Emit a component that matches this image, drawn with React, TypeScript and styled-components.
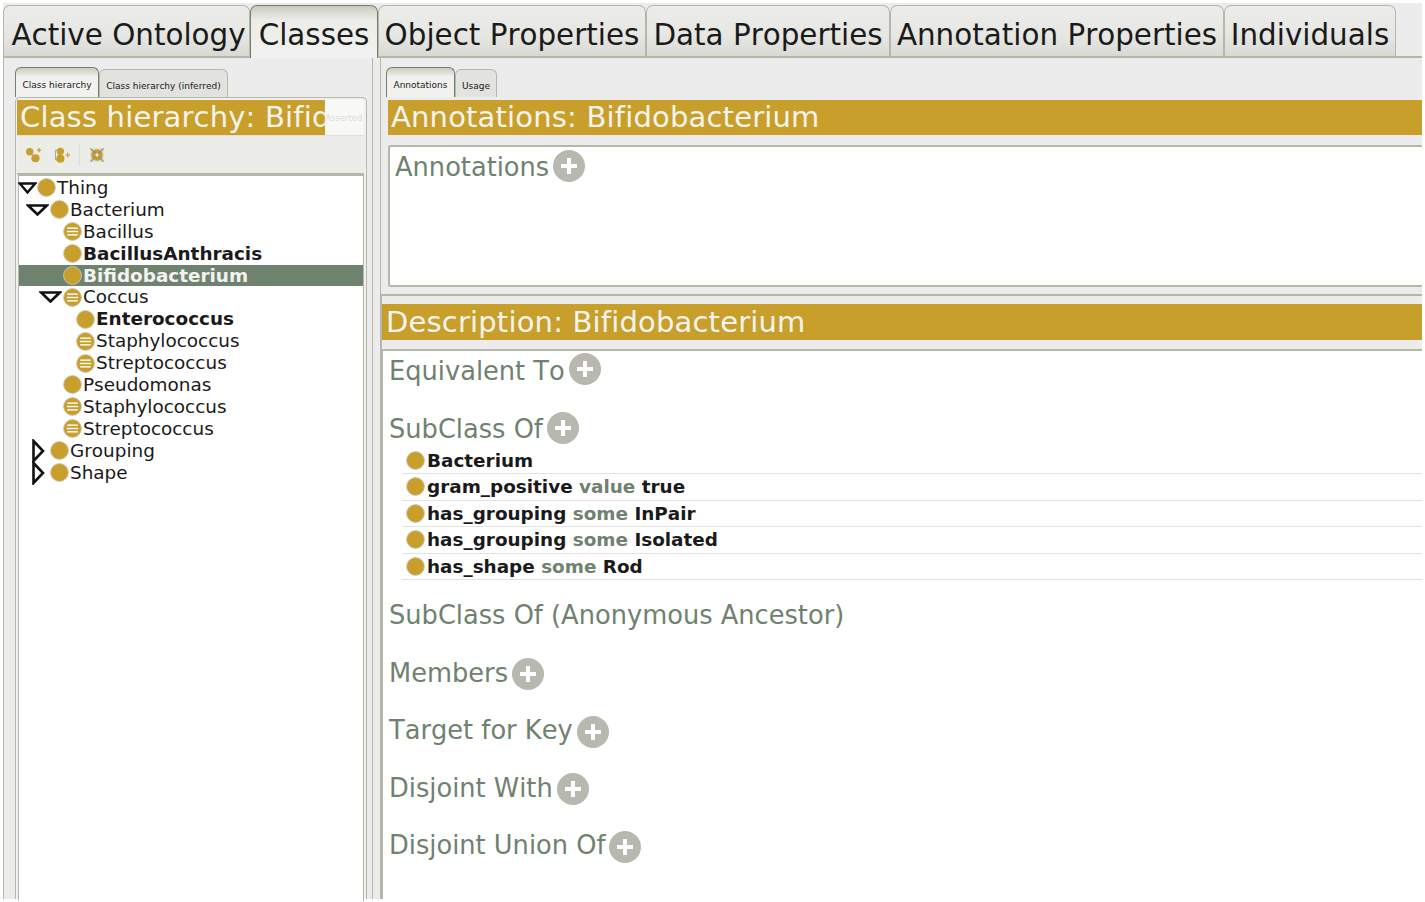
import React from "react";
import styled, { createGlobalStyle } from "styled-components";

const GOLD = "#c99f2b";
const GREEN = "#6f8270";
const LINE = "#b5b8a8";

const GlobalStyle = createGlobalStyle`
  html, body {
    margin: 0;
    padding: 0;
    background: #ffffff;
  }
  * {
    box-sizing: border-box;
  }
`;

type Node = { label: string; depth: number; bold?: boolean; lined?: boolean; toggle?: "open" | "closed"; selected?: boolean };

const tree: Node[] = [
  { label: "Thing", depth: 0, toggle: "open" },
  { label: "Bacterium", depth: 1, toggle: "open" },
  { label: "Bacillus", depth: 2, lined: true },
  { label: "BacillusAnthracis", depth: 2, bold: true },
  { label: "Bifidobacterium", depth: 2, bold: true, selected: true },
  { label: "Coccus", depth: 2, lined: true, toggle: "open" },
  { label: "Enterococcus", depth: 3, bold: true },
  { label: "Staphylococcus", depth: 3, lined: true },
  { label: "Streptococcus", depth: 3, lined: true },
  { label: "Pseudomonas", depth: 2 },
  { label: "Staphylococcus", depth: 2, lined: true },
  { label: "Streptococcus", depth: 2, lined: true },
  { label: "Grouping", depth: 1, toggle: "closed" },
  { label: "Shape", depth: 1, toggle: "closed" },
];

const mainTabs = [
  { label: "Active Ontology", width: 247 },
  { label: "Classes", width: 128, active: true },
  { label: "Object Properties", width: 268 },
  { label: "Data Properties", width: 244 },
  { label: "Annotation Properties", width: 334 },
  { label: "Individuals", width: 172 },
];

const subclassRows = [
  { left: "Bacterium" },
  { left: "gram_positive", kw: "value", right: "true" },
  { left: "has_grouping", kw: "some", right: "InPair" },
  { left: "has_grouping", kw: "some", right: "Isolated" },
  { left: "has_shape", kw: "some", right: "Rod" },
];

const ClassIcon = ({ lined }: { lined?: boolean }) => (
  <IconSvg viewBox="0 0 20 20">
    <circle cx="10" cy="10" r="9.4" fill={GOLD} stroke="#c9c6b8" strokeWidth="1" />
    {lined && (
      <g stroke="#ffffff" strokeWidth="1.5">
        <line x1="4.5" y1="6.5" x2="15.5" y2="6.5" />
        <line x1="4" y1="10" x2="16" y2="10" />
        <line x1="4.5" y1="13.5" x2="15.5" y2="13.5" />
      </g>
    )}
  </IconSvg>
);

const Toggle = ({ kind, depth }: { kind?: "open" | "closed"; depth: number }) => {
  if (kind === "open") {
    return (
      <DownArrow $wide={depth > 0} viewBox="0 0 22 12" preserveAspectRatio="none">
        <path d="M2 1.5 H20 L11 10.5 Z" fill="#ffffff" stroke="#111" strokeWidth="2.6" />
      </DownArrow>
    );
  }
  if (kind === "closed") {
    return (
      <RightArrow viewBox="0 0 13 24">
        <path d="M1.5 2 L11 12 L1.5 22 Z" fill="#ffffff" stroke="#111" strokeWidth="2.6" />
      </RightArrow>
    );
  }
  return null;
};

const Plus = ({ dy = 0 }: { dy?: number }) => (
  <PlusSvg $dy={dy} viewBox="0 0 32 32">
    <circle cx="16" cy="16" r="16" fill="#b8b8ae" />
    <path d="M16 8 V24 M8 16 H24" stroke="#ffffff" strokeWidth="4" />
  </PlusSvg>
);

const Section = ({ title, plus = true, dy = 0, children }: { title: string; plus?: boolean; dy?: number; children?: React.ReactNode }) => (
  <SectionBlock>
    <SectionHead>
      <SectionTitle>{title}</SectionTitle>
      {plus && <Plus dy={dy} />}
    </SectionHead>
    {children}
  </SectionBlock>
);

export default function App() {
  return (
    <Page>
      <GlobalStyle />
      <MainTabs>
        {mainTabs.map((t) => (
          <MainTab key={t.label} $active={t.active} $width={t.width}>
            {t.label}
          </MainTab>
        ))}
      </MainTabs>
      <Workspace>
        <LeftColumn>
          <SubTabs>
            <SubTab $active $width={84}>Class hierarchy</SubTab>
            <SubTab $width={129}>Class hierarchy (inferred)</SubTab>
          </SubTabs>
          <ViewFrame>
            <LeftHeader>
              <LeftTitle>Class hierarchy: Bifidobacterium</LeftTitle>
              <Ghost>Asserted</Ghost>
            </LeftHeader>
            <Toolbar>
              <ToolIcon viewBox="0 0 22 22">
                <circle cx="7" cy="7" r="4.5" fill={GOLD} />
                <circle cx="14" cy="15" r="5" fill={GOLD} />
                <path d="M7 7 L14 15" stroke="#999" strokeWidth="1" />
                <path d="M16 5 H21 M18.5 2.5 V7.5" stroke={GOLD} strokeWidth="1.4" />
              </ToolIcon>
              <ToolIcon viewBox="0 0 22 22">
                <path d="M6 5 H3 V17 H6" fill="none" stroke="#999" strokeWidth="1" />
                <circle cx="9" cy="6.5" r="4.5" fill={GOLD} />
                <circle cx="9" cy="15.5" r="5" fill={GOLD} />
                <path d="M15 11 H21 M18 8 V14" stroke={GOLD} strokeWidth="1.4" />
              </ToolIcon>
              <ToolDivider />
              <ToolIcon viewBox="0 0 22 22">
                <rect x="3" y="3" width="16" height="16" fill="#d9d6c6" />
                <circle cx="11" cy="11" r="7" fill={GOLD} />
                <path d="M3 3 L19 19 M19 3 L3 19" stroke="#8c8c80" strokeWidth="1.4" />
                <circle cx="11" cy="11" r="2" fill="#efefe8" />
              </ToolIcon>
            </Toolbar>
            <TreeBox>
              {tree.map((n, i) => (
                <TreeRow key={i} $depth={n.depth} $selected={n.selected}>
                  <ToggleSlot>
                    <Toggle kind={n.toggle} depth={n.depth} />
                  </ToggleSlot>
                  <ClassIcon lined={n.lined} />
                  <TreeLabel $bold={n.bold}>{n.label}</TreeLabel>
                </TreeRow>
              ))}
            </TreeBox>
          </ViewFrame>
        </LeftColumn>

        <RightColumn>
          <UpperPane>
            <SubTabs>
              <SubTab $active $width={69}>Annotations</SubTab>
              <SubTab $width={42}>Usage</SubTab>
            </SubTabs>
            <AnnotationsBar>Annotations: Bifidobacterium</AnnotationsBar>
            <AnnotationBox>
              <SectionHead>
                <SectionTitle>Annotations</SectionTitle>
                <Plus dy={-1} />
              </SectionHead>
            </AnnotationBox>
          </UpperPane>
          <LowerPane>
            <GoldBar>Description: Bifidobacterium</GoldBar>
            <DescriptionBox>
              <Section title="Equivalent To" dy={-2} />
              <Section title="SubClass Of" dy={-1}>
                <AxiomList>
                  {subclassRows.map((r, i) => (
                    <AxiomRow key={i}>
                      <ClassIcon />
                      <span>
                        {r.left}
                        {r.kw && <Keyword> {r.kw} </Keyword>}
                        {r.right}
                      </span>
                    </AxiomRow>
                  ))}
                </AxiomList>
              </Section>
              <Section title="SubClass Of (Anonymous Ancestor)" plus={false} />
              <Section title="Members" dy={1} />
              <Section title="Target for Key" dy={2} />
              <Section title="Disjoint With" dy={1} />
              <Section title="Disjoint Union Of" dy={2} />
            </DescriptionBox>
          </LowerPane>
        </RightColumn>
      </Workspace>
    </Page>
  );
}

const Page = styled.div`
  width: 1425px;
  height: 902px;
  padding: 3px 3px 3px 3px;
  background: #ffffff;
  overflow: hidden;
  font-family: "DejaVu Sans", sans-serif;
  font-kerning: none;
  color: #1a1a1a;
  display: flex;
  flex-direction: column;
`;

const MainTabs = styled.div`
  height: 55px;
  flex: none;
  display: flex;
  align-items: flex-end;
  background: #ececec;
  border-bottom: 2px solid ${LINE};
`;

const MainTab = styled.div<{ $active?: boolean; $width: number }>`
  width: ${(p) => p.$width}px;
  height: ${(p) => (p.$active ? "53px" : "51px")};
  margin-bottom: ${(p) => (p.$active ? "-2px" : "0")};
  padding-bottom: ${(p) => (p.$active ? "3px" : "1px")};
  flex: none;
  display: flex;
  align-items: flex-end;
  justify-content: center;
  font-size: 29.4px;
  line-height: 40px;
  white-space: nowrap;
  border: 1px solid ${(p) => (p.$active ? GREEN : LINE)};
  border-bottom: none;
  border-radius: 7px 7px 0 0;
  background: ${(p) =>
    p.$active
      ? "linear-gradient(#c9cbbd 0, #ecece8 14px, #f1f1ef 100%)"
      : "linear-gradient(#ececea 0, #e6e6e3 60%, #d9d9d4 100%)"};

  &:first-child {
    padding-left: 4px;
  }
`;

const Workspace = styled.div`
  flex: 1;
  min-height: 0;
  display: flex;
  background: #ececec;
`;

const LeftColumn = styled.div`
  width: 370px;
  flex: none;
  padding: 8px 5px 0 11px;
  border-left: 1px solid ${LINE};
  border-right: 1px solid ${LINE};
  display: flex;
  flex-direction: column;
`;

const RightColumn = styled.div`
  flex: 1;
  min-width: 0;
  margin-left: 7px;
  display: flex;
  flex-direction: column;
`;

const SubTabs = styled.div`
  height: 31px;
  flex: none;
  display: flex;
  align-items: flex-end;
`;

const SubTab = styled.div<{ $active?: boolean; $width: number }>`
  width: ${(p) => p.$width}px;
  height: ${(p) => (p.$active ? "30px" : "28px")};
  flex: none;
  font-size: 9px;
  padding-top: ${(p) => (p.$active ? "12px" : "11px")};
  text-align: center;
  white-space: nowrap;
  border: 1px solid ${(p) => (p.$active ? GREEN : LINE)};
  border-bottom: none;
  border-radius: 6px 6px 0 0;
  background: ${(p) => (p.$active ? "linear-gradient(#c9cbbd 0, #f1f1ef 9px)" : "#e2e2de")};
`;

const ViewFrame = styled.div`
  flex: 1;
  min-height: 0;
  width: 352px;
  padding: 2px 2px 0 1px;
  border: 1px solid ${LINE};
  border-bottom: none;
  border-radius: 5px 5px 0 0;
  background: #f0f0ee;
  display: flex;
  flex-direction: column;
`;

const LeftHeader = styled.div`
  height: 36px;
  flex: none;
  display: flex;
  align-items: center;
  background: #f8f8f6;
  border-bottom: 1px solid #e1e1dc;
`;

const LeftTitle = styled.div`
  width: 308px;
  height: 35px;
  flex: none;
  padding-left: 3px;
  overflow: hidden;
  white-space: nowrap;
  color: #f4f4f0;
  background: ${GOLD};
  font-size: 29px;
  line-height: 35px;
  letter-spacing: 0.18px;
`;

const Ghost = styled.div`
  font-size: 8.5px;
  color: #dcdcd8;
  white-space: nowrap;
`;

const Toolbar = styled.div`
  height: 39px;
  flex: none;
  display: flex;
  align-items: center;
  gap: 11px;
  padding: 0 0 0 7px;
  border-bottom: 2px solid ${LINE};
  background: #ecece9;
`;

const ToolIcon = styled.svg`
  width: 18px;
  height: 18px;
  flex: none;
`;

const ToolDivider = styled.div`
  width: 1px;
  height: 22px;
  margin: 0 -3px;
  background: #dcdcd6;
`;

const TreeBox = styled.div`
  flex: 1;
  min-height: 0;
  margin: 0 0 -2px 1px;
  padding: 1px 0 0 0;
  background: #ffffff;
  border: 1px solid ${LINE};
  border-bottom: none;
`;

const TreeRow = styled.div<{ $depth: number; $selected?: boolean }>`
  height: 21.9px;
  display: flex;
  align-items: center;
  padding-left: ${(p) => p.$depth * 13}px;
  color: ${(p) => (p.$selected ? "#f2f2ee" : "#1a1a1a")};
  background: ${(p) => (p.$selected ? GREEN : "transparent")};
`;

const ToggleSlot = styled.div`
  width: 18px;
  height: 22px;
  flex: none;
  display: flex;
  align-items: center;
  justify-content: flex-end;
`;

const DownArrow = styled.svg<{ $wide?: boolean }>`
  width: ${(p) => (p.$wide ? "23px" : "19px")};
  height: 12px;
  flex: none;
  margin-right: ${(p) => (p.$wide ? "1px" : "0")};
`;

const RightArrow = styled.svg`
  width: 13px;
  height: 24px;
  flex: none;
  margin-right: 5px;
`;

const IconSvg = styled.svg`
  width: 19px;
  height: 19px;
  flex: none;
  margin-right: 1px;
`;

const TreeLabel = styled.span<{ $bold?: boolean }>`
  font-size: 18.4px;
  line-height: 22px;
  font-weight: ${(p) => (p.$bold ? 700 : 400)};
  white-space: nowrap;
`;

const UpperPane = styled.div`
  height: 238px;
  flex: none;
  padding: 8px 0 0 5px;
  border-left: 1px solid ${LINE};
  border-bottom: 2px solid ${LINE};
  display: flex;
  flex-direction: column;
`;

const GoldBar = styled.div`
  height: 36px;
  flex: none;
  margin-top: 3px;
  padding-left: 4px;
  color: #f4f4f0;
  background: ${GOLD};
  font-size: 29px;
  line-height: 36px;
  letter-spacing: 0.18px;
  white-space: nowrap;
`;

const AnnotationsBar = styled(GoldBar)`
  height: 35px;
  margin-left: 2px;
  padding-left: 3px;
  line-height: 35px;
`;

const AnnotationBox = styled.div`
  height: 142px;
  flex: none;
  margin: 10px 0 0 2px;
  padding: 2px 0 0 5px;
  background: #ffffff;
  border: 2px solid ${LINE};
  border-right: none;
  border-radius: 3px 0 0 3px;
`;

const LowerPane = styled.div`
  flex: 1;
  min-height: 0;
  padding-top: 5px;
  border-left: 2px solid ${LINE};
  display: flex;
  flex-direction: column;
`;

const DescriptionBox = styled.div`
  flex: 1;
  min-height: 0;
  margin-top: 9px;
  padding: 2px 0 0 6px;
  background: #ffffff;
  border-top: 2px solid ${LINE};
  border-left: 1px solid ${LINE};
  display: flex;
  flex-direction: column;
`;

const SectionBlock = styled.div`
  min-height: 57.5px;
  flex: none;
`;

const SectionHead = styled.div`
  height: 36px;
  display: flex;
  align-items: center;
  gap: 4px;
`;

const SectionTitle = styled.span`
  font-size: 25.7px;
  line-height: 36px;
  color: ${GREEN};
  white-space: nowrap;
`;

const PlusSvg = styled.svg<{ $dy: number }>`
  width: 32px;
  height: 32px;
  flex: none;
  margin-top: ${(p) => p.$dy * 2}px;
`;

const AxiomList = styled.div`
  margin: 1px 0 17px 13px;
`;

const AxiomRow = styled.div`
  height: 26.5px;
  display: flex;
  align-items: center;
  gap: 1px;
  padding-left: 4px;
  border-bottom: 1px solid #e2e2e0;
  font-size: 18.4px;
  font-weight: 700;
  color: #1a1a1a;
  white-space: pre;
`;

const Keyword = styled.span`
  color: ${GREEN};
`;
